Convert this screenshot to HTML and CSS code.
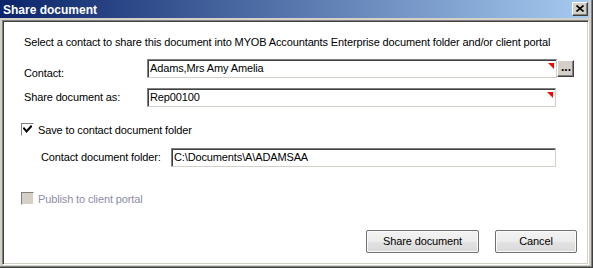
FILE: index.html
```html
<!DOCTYPE html>
<html>
<head>
<meta charset="utf-8">
<link rel="stylesheet" href="styles.css">
</head>
<body>
<div class="window">
  <div class="titlebar">
    <span class="title">Share document</span>
    <span class="close-btn"><svg width="8" height="7" viewBox="0 0 8 7"><path d="M0.5 0.5 L7.5 6.5 M7.5 0.5 L0.5 6.5" stroke="#000" stroke-width="1.6" fill="none"/></svg></span>
  </div>
  <div class="panel">
    <div class="intro">Select a contact to share this document into MYOB Accountants Enterprise document folder and/or client portal</div>
    <div class="row row-contact">
      <span class="label label-contact">Contact:</span>
      <div class="field field-contact"><span class="value">Adams,Mrs Amy Amelia</span><span class="req"></span></div>
      <span class="ellipsis-btn">...</span>
    </div>
    <div class="row row-share">
      <span class="label">Share document as:</span>
      <div class="field field-share"><span class="value">Rep00100</span><span class="req"></span></div>
    </div>
    <div class="check-row row-save">
      <span class="checkbox"><svg width="9" height="9" viewBox="0 0 9 9"><path d="M1 3.5 L3.5 6.5 L8 1.5" stroke="#000" stroke-width="2" fill="none" stroke-linecap="square"/></svg></span>
      <span class="check-label">Save to contact document folder</span>
    </div>
    <div class="row row-folder">
      <span class="label label-folder">Contact document folder:</span>
      <div class="field field-folder"><span class="value">C:\Documents\A\ADAMSAA</span></div>
    </div>
    <div class="check-row row-publish">
      <span class="checkbox disabled"></span>
      <span class="check-label disabled-text">Publish to client portal</span>
    </div>
    <div class="buttons">
      <span class="btn btn-share">Share document</span>
      <span class="btn btn-cancel">Cancel</span>
    </div>
  </div>
</div>
</body>
</html>
```

FILE: styles.css
```css
html, body {
  margin: 0;
  padding: 0;
  background: #d4d0c8;
}
body {
  font-family: "Liberation Sans", Arial, sans-serif;
  font-size: 11px;
  line-height: 13px;
  letter-spacing: -0.13px;
  color: #000;
}
.window {
  width: 593px;
  height: 268px;
  box-sizing: border-box;
  display: flex;
  flex-direction: column;
  background: #d4d0c8;
  border-right: 1px solid #404040;
  border-bottom: 1px solid #404040;
  box-shadow: inset -1px -1px 0 #808080;
  padding: 0 3px 2px 0;
}
.titlebar {
  height: 18px;
  flex: none;
  display: flex;
  align-items: center;
  justify-content: space-between;
  background: linear-gradient(to right, #0a246a, #a6caf0);
  padding: 0 1px 0 3px;
}
.title {
  color: #fff;
  font-weight: bold;
  font-size: 12px;
  line-height: 14px;
  letter-spacing: 0;
  margin-top: 1px;
}
.close-btn {
  width: 16px;
  height: 14px;
  box-sizing: border-box;
  background: #d4d0c8;
  border-top: 1px solid #fff;
  border-left: 1px solid #fff;
  border-right: 1px solid #404040;
  border-bottom: 1px solid #404040;
  box-shadow: inset -1px -1px 0 #808080;
  display: flex;
  align-items: center;
  justify-content: center;
  padding: 0 1px 1px 0;
}
.close-btn svg { display: block; }
.panel {
  flex: 1;
  margin: 2px 0 0 2px;
  background: #fff;
  border-top: 1px solid #808080;
  border-left: 1px solid #808080;
  border-right: 1px solid #fff;
  border-bottom: 1px solid #fff;
  box-shadow: inset 1px 1px 0 #404040, inset -1px -1px 0 #d4d0c8;
  padding: 15px 0 0 21px;
  display: flex;
  flex-direction: column;
}
.intro {
  height: 13px;
  white-space: nowrap;
}
.row {
  display: flex;
  align-items: flex-start;
  height: 19px;
}
.label {
  width: 123px;
  flex: none;
  margin-top: 3px;
  white-space: nowrap;
}
.label-contact { margin-top: 8px; }
.row-contact { margin-top: 10px; align-items: flex-end; }
.row-contact .label { align-self: flex-start; }
.row-share { margin-top: 10px; }
.field {
  position: relative;
  height: 19px;
  box-sizing: border-box;
  border-top: 1px solid #808080;
  border-left: 1px solid #808080;
  border-right: 1px solid #d4d0c8;
  border-bottom: 1px solid #d4d0c8;
  box-shadow: inset 1px 1px 0 #404040;
  padding: 2px 0 0 2px;
  white-space: nowrap;
  background: #fff;
}
.field-contact { width: 410px; }
.field-share { width: 409px; }
.field-folder { width: 385px; }
.req {
  position: absolute;
  top: 3px;
  right: 2px;
  width: 0;
  height: 0;
  border-top: 6px solid #ff0000;
  border-left: 6px solid transparent;
}
.ellipsis-btn {
  width: 17px;
  height: 17px;
  box-sizing: border-box;
  flex: none;
  background: #d4d0c8;
  border-top: 1px solid #fff;
  border-left: 1px solid #fff;
  border-right: 1px solid #404040;
  border-bottom: 1px solid #404040;
  box-shadow: inset -1px -1px 0 #808080;
  font-weight: bold;
  font-size: 12px;
  line-height: 11px;
  letter-spacing: 0;
  display: flex;
  align-items: flex-end;
  justify-content: center;
  padding: 0 0 3px 1px;
  margin-bottom: 1px;
}
.check-row {
  display: flex;
  align-items: flex-start;
  height: 13px;
  margin-left: -3px;
}
.row-save { margin-top: 16px; }
.checkbox {
  width: 13px;
  height: 13px;
  box-sizing: border-box;
  flex: none;
  background: #fff;
  border-top: 1px solid #808080;
  border-left: 1px solid #808080;
  border-right: 1px solid #fff;
  border-bottom: 1px solid #fff;
  display: flex;
  align-items: center;
  justify-content: center;
}
.checkbox svg { display: block; }
.checkbox.disabled {
  background: #d4d0c8;
}
.check-label {
  margin-left: 4px;
  margin-top: 1px;
  white-space: nowrap;
}
.disabled-text { color: #8d8da6; }
.row-folder { margin-top: 12px; }
.label-folder {
  width: 130px;
  padding-left: 17px;
}
.field-folder { padding-left: 2px; }
.row-publish { margin-top: 25px; }
.buttons {
  margin-top: 25px;
  display: flex;
  justify-content: flex-end;
  gap: 16px;
  padding-right: 11px;
}
.btn {
  height: 23px;
  box-sizing: border-box;
  border: 1px solid #707070;
  border-radius: 2px;
  background: linear-gradient(to bottom, #f3f3f3 0%, #ececec 50%, #e2e2e2 51%, #dadada 100%);
  box-shadow: inset 0 0 0 1px #fafafa;
  display: flex;
  align-items: center;
  justify-content: center;
}
.btn-share { width: 113px; }
.btn-cancel { width: 82px; }
```
